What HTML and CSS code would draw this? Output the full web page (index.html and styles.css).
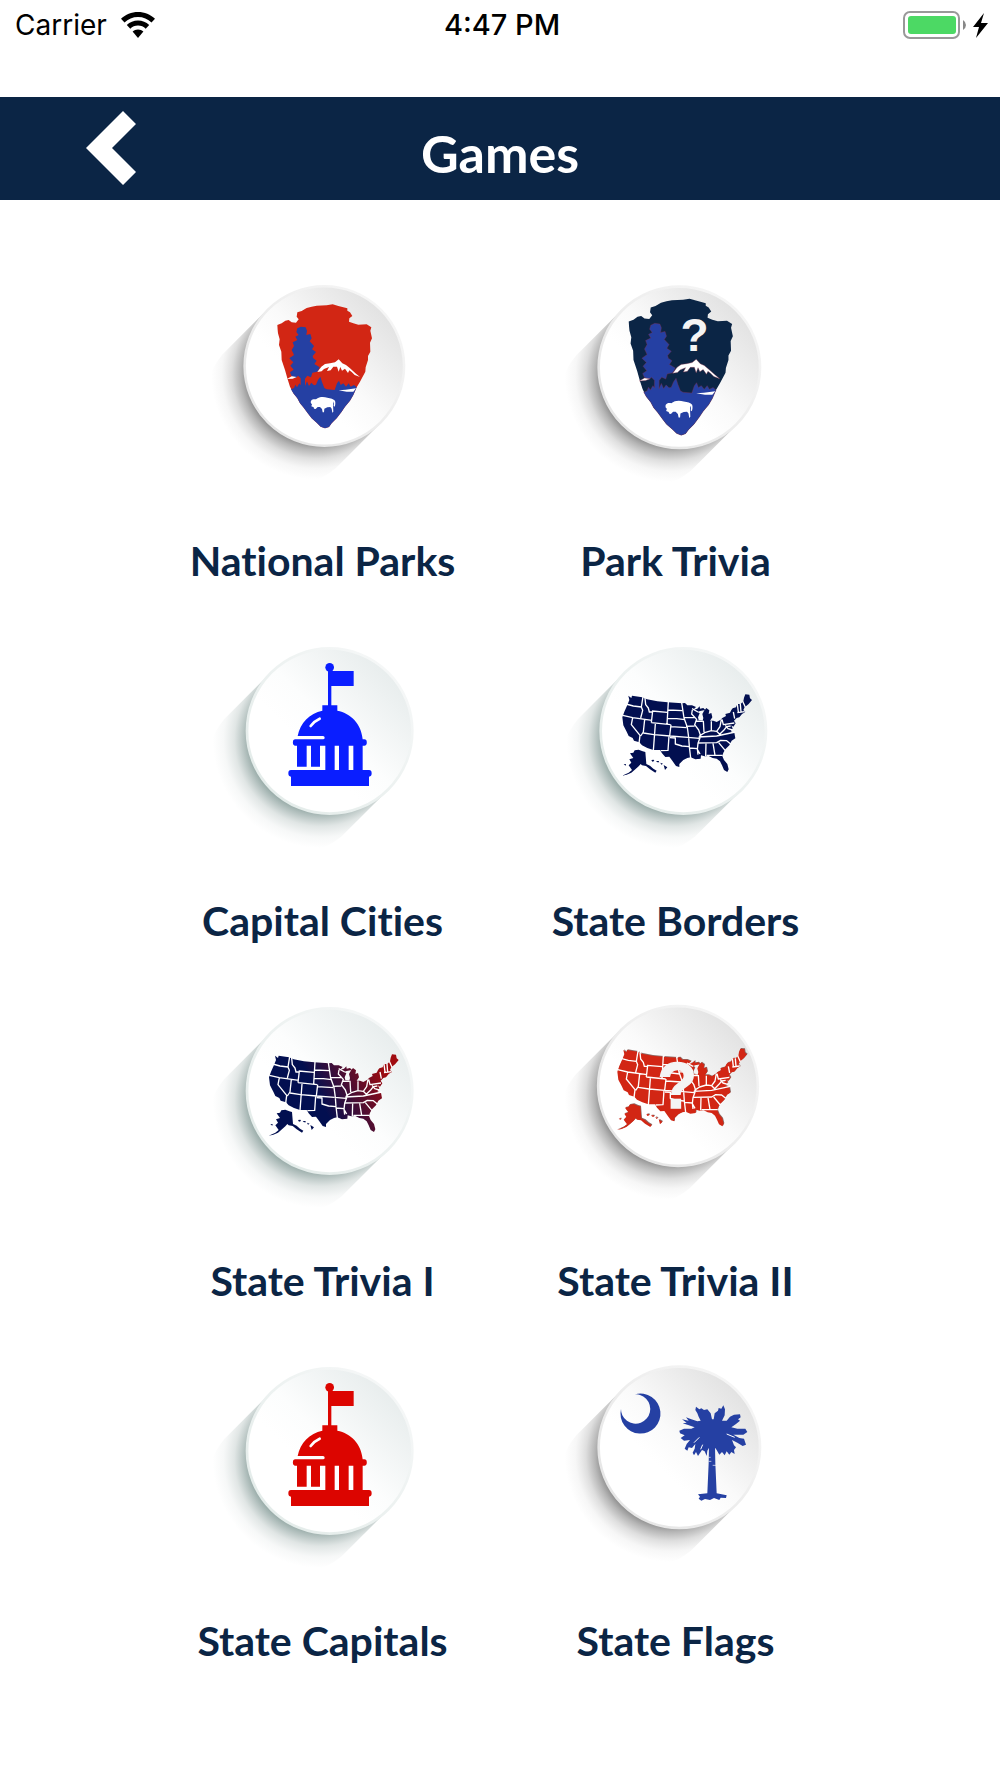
FILE: index.html
```html
<!DOCTYPE html>
<html lang="en">
<head>
<meta charset="utf-8">
<meta name="viewport" content="width=device-width, initial-scale=1">
<title>Games</title>
<link rel="stylesheet" href="styles.css">
</head>
<body>
<div class="status">
  <div class="status-left">
    <span>Carrier</span>
    <svg class="wifi" viewBox="0 0 34 26" aria-hidden="true">
      <path d="M17 0C10.500 0 4.500 2.500 0 6.800L3.500 10.500C7 7 11.800 5 17 5S27 7 30.500 10.500L34 6.800C29.500 2.500 23.500 0 17 0Z"/>
      <path d="M17 8.500C12.700 8.500 8.800 10.200 5.800 13L9.300 16.700C11.300 14.700 14 13.500 17 13.500S22.700 14.700 24.700 16.700L28.200 13C25.200 10.200 21.300 8.500 17 8.500Z"/>
      <path d="M17 17.500C14.900 17.500 13 18.300 11.600 19.600L17 26L22.400 19.600C21 18.300 19.100 17.500 17 17.500Z"/>
    </svg>
  </div>
  <time class="clock">4:47 PM</time>
  <div class="status-right">
    <svg class="battery" viewBox="0 0 86 28" aria-hidden="true">
      <rect x="1" y="1" width="55" height="26" rx="6" fill="none" stroke="#999" stroke-width="2"/>
      <rect x="5" y="5" width="48" height="18" rx="3" fill="#4cd964"/>
      <path d="M60 9Q63 11 63 14Q63 17 60 19Z" fill="#888"/>
      <path d="M81 2L70 16H76L73 27L85 12H78Z" fill="#000"/>
    </svg>
  </div>
</div>

<header class="bar">
  <button class="back" type="button" aria-label="Back">
    <svg viewBox="0 0 50 74" aria-hidden="true"><path d="M37 0L50 13L26 37L50 61L37 74L0 37Z" fill="#fff"/></svg>
  </button>
  <h1 class="title">Games</h1>
</header>

<main class="games">
  <a class="game" href="#national-parks">
    <svg class="icon" viewBox="9 0 660 660" aria-hidden="true">
      <defs>
        <linearGradient id="face-gray" gradientUnits="userSpaceOnUse" x1="-60" y1="60" x2="177" y2="-177">
          <stop offset="0" stop-color="#fff"/><stop offset=".3" stop-color="#fafafa"/><stop offset="1" stop-color="#e2e2e2"/>
        </linearGradient>
        <linearGradient id="face-teal" gradientUnits="userSpaceOnUse" x1="-60" y1="60" x2="177" y2="-177">
          <stop offset="0" stop-color="#fff"/><stop offset=".3" stop-color="#fcfdfd"/><stop offset="1" stop-color="#e8eded"/>
        </linearGradient>
        <linearGradient id="rim-gray" gradientUnits="userSpaceOnUse" x1="-177" y1="177" x2="177" y2="-177">
          <stop offset="0" stop-color="#e6e6e6"/><stop offset="1" stop-color="#f5f5f5"/>
        </linearGradient>
        <linearGradient id="rim-teal" gradientUnits="userSpaceOnUse" x1="-177" y1="177" x2="177" y2="-177">
          <stop offset="0" stop-color="#e4ecea"/><stop offset="1" stop-color="#f5f7f7"/>
        </linearGradient>
        <radialGradient id="cast-gray" gradientUnits="userSpaceOnUse" cx="-26" cy="26" r="325">
          <stop offset=".64" stop-color="#777" stop-opacity=".9"/><stop offset=".72" stop-color="#888" stop-opacity=".6"/><stop offset=".8" stop-color="#888" stop-opacity=".28"/><stop offset=".9" stop-color="#999" stop-opacity=".08"/><stop offset="1" stop-color="#999" stop-opacity="0"/>
        </radialGradient>
        <radialGradient id="cast-teal" gradientUnits="userSpaceOnUse" cx="-26" cy="26" r="325">
          <stop offset=".64" stop-color="#7f9793" stop-opacity=".9"/><stop offset=".72" stop-color="#8a9f9c" stop-opacity=".6"/><stop offset=".8" stop-color="#92a5a2" stop-opacity=".28"/><stop offset=".9" stop-color="#99aaa8" stop-opacity=".08"/><stop offset="1" stop-color="#99aaa8" stop-opacity="0"/>
        </radialGradient>
        <linearGradient id="navy-red" gradientUnits="userSpaceOnUse" x1="310" y1="330" x2="500" y2="235">
          <stop offset="0" stop-color="#020f50"/><stop offset="1" stop-color="#a00c10"/>
        </linearGradient>
        <g id="disc-gray">
          <path d="M-176-176L-316-36A250 250 0 0 0 36 316L176 176Z" fill="url(#cast-gray)"/>
          <circle r="247" fill="url(#face-gray)" stroke="url(#rim-gray)" stroke-width="8"/>
        </g>
        <g id="disc-teal">
          <path d="M-176-176L-316-36A250 250 0 0 0 36 316L176 176Z" fill="url(#cast-teal)"/>
          <circle r="248" fill="url(#face-teal)" stroke="url(#rim-teal)" stroke-width="8"/>
        </g>
        <g id="arrowhead">
          <path d="M202 165L215 160L226 152L236 150L245 157L258 158L266 148L260 140L262 127L275 123L290 114L305 110L320 107L350 106L368 103L385 108L400 112L412 115L412 122L420 127L427 138L418 145L417 155L430 160L445 164L470 163L484 172L481 182L486 205L480 218L481 245L474 258L474 270L467 292L466 305L458 320L450 335L440 352L430 375L420 392L405 410L395 425L380 445L365 460L357 471L345 475L332 470L320 458L305 445L295 432L280 412L270 400L262 385L250 370L240 350L232 325L225 300L215 270L214 245L207 225L209 208L204 190L203 180Z"/>
          <g class="park-line" fill="#2540a3">
            <path d="M243 358L252 354L256 344L261 352L268 340L272 346V325L264 317L258 323L245 318L240 307L251 299L241 287L250 277L238 265L252 255L245 240L252 228L248 217L262 210L256 200L266 195L259 186L262 175L273 170L287 172L291 182L289 195L301 192L305 205L299 214L312 228L306 238L318 246L308 258L310 265L320 272L313 282L329 292L322 305L307 308L303 322L292 317L285 326V348L291 334L297 348L304 338L312 346L318 344L324 330L331 320L336 336L343 354L350 358L374 360L381 340L387 332L392 345L400 340L408 350L416 340L422 350L432 345L440 352L430 375L420 392L405 410L395 425L380 445L365 460L357 471L345 475L332 470L320 458L305 445L295 432L280 412L270 400L262 385L250 370Z"/>
          </g>
          <g class="park-line" fill="#fff">
            <path d="M322 306L334 290L345 282L360 280L375 277L386 268L397 280L408 285L420 295L438 311L450 321L434 315L425 306L418 301L414 309L405 296L396 302L391 291L386 305L381 290L370 290L362 301L351 303L357 291L342 297L335 304Z"/>
            <path d="M231 327L245 319L260 321L248 326Z"/>
          </g>
          <path fill="#fff" d="M386 361L407 359L438 355L430 365L410 365ZM303 400C300 390 308 386 318 388C328 379 342 380 352 383C362 384 371 387 375 392C377 398 376 405 374 410L371 408L372 394L369 401L370 425L367 428L365 416L361 411L352 412L343 416L342 427L338 427L336 417L330 411L323 411L317 417L312 416L311 412L304 409L306 403Z"/>
        </g>
        <g id="capitol">
          <circle cx="329" cy="112" r="13"/>
          <path d="M324 115H334V123H401V168H334V226H352V242C393 250 424 282 428 328H433A7 9 0 0 1 433 347H428V420H447A8 10 0 0 1 447 440V468H213V440A8 10 0 0 1 213 420H316V347H300V410H273V347H260V410H231V347H226A7 9 0 0 1 226 328H309A5 5 0 0 0 309 318H233C240 280 269 249 307 242V226H324Z"/>
          <path d="M344 347H357V420H344ZM386 347H400V420H386Z" fill="#fff"/>
          <path d="M272 288Q283 273 299 266" fill="none" stroke="#fff" stroke-width="8" stroke-linecap="round"/>
        </g>
        <g id="usa">
          <path d="M175 197L184 204L186 197L217 202L231 208L262 214L293 217L336 220L345 219L352 226L366 226L378 231L369 240L382 236L389 229L390 236L400 234L406 240L390 243L382 246L389 250L384 262L386 270L398 272L400 264L397 252L402 243L409 234L418 241L416 252L424 249L427 262L420 272L430 272L440 276L452 269L457 264L468 258L466 252L480 248L484 240L488 235L498 232L502 222L512 222L520 214L522 203L526 193L538 194L540 205L546 210L536 222L524 232L520 240L526 246L516 252L508 262L500 264L492 272L497 280L490 290L484 286L488 296L482 304L493 308L496 325L485 332L478 346L466 358L460 368L457 378L462 390L472 402L476 418L472 426L462 420L456 406L450 394L440 386L428 384L416 378L404 379L393 376L392 386L376 388L362 382L352 384L340 390L328 402L328 411L318 408L308 394L298 380L286 381L276 370L270 360L250 360L232 354L216 346L208 337L192 332L188 324L176 318L170 305L160 286L157 262L163 245L172 225L178 210Z"/>
          <path d="M180 370L190 368L194 361L206 359L218 364L226 366L229 402L240 407L250 416L260 422L256 428L240 418L228 408L216 406L212 402L206 409L196 418L184 428L170 434L156 437L176 428L186 420L176 406L184 398L178 388L190 384L184 376ZM244 390L251 389L253 393L247 395ZM258 393L266 393L268 397L262 397ZM271 398L279 401L274 404ZM281 405L292 412L285 420ZM161 403L168 402L167 407Z"/>
          <g fill="none" stroke="#fff" stroke-width="4" stroke-linejoin="round">
            <path d="M168 222L190 228L214 231M219 200L214 231L218 241L212 264M158 256L188 263L246 271M188 263L184 284L210 316L207 340M224 268L220 306L212 318M225 204L227 224L235 234L238 246L247 246M248 243L244 278M246 243L292 247M295 215L291 283M244 278L302 284M256 282L250 362M220 309L252 314L300 318M303 284L299 318M297 318L294 361L272 362M300 323L316 324L316 342L336 348L358 350M300 318L354 322M303 290L350 293M295 240L338 242M292 265L320 266L345 269"/>
            <path d="M335 218L342 264L352 292L356 322L358 350L362 384M342 262L374 263M348 289L374 288M354 322L388 325M358 354L382 356L384 374M367 240L365 252L380 268L374 284L386 300L392 318L384 340L382 358L390 372M378 273L398 274M400 272L402 306M424 274L424 302M388 318L404 308L424 302L440 304L450 290L454 268M456 268L460 284L493 279M386 321L440 318L496 306M384 339L440 338L452 331L470 332L482 342M408 340L407 378M429 340L435 376M446 338L466 362M410 376L458 376M440 304L449 313L462 300L470 290L482 288M502 222L505 246M511 222L513 246M518 214L526 232M502 248L524 245M490 246L494 266M384 246L366 236M466 286L474 296L488 300"/>
          </g>
        </g>
      </defs>
      <use href="#disc-gray" transform="translate(343 288) scale(.968)"/>
      <use href="#arrowhead" fill="#d22614"/>
    </svg>
    <span class="name">National Parks</span>
  </a>

  <a class="game" href="#park-trivia">
    <svg class="icon park-quiz" viewBox="18 0 660 660" aria-hidden="true">
      <use href="#disc-gray" transform="translate(358 292) scale(.98)"/>
      <use href="#arrowhead" fill="#0b2545" transform="translate(-16 -27) scale(1.1)"/>
      <text x="404" y="243" font-size="138">?</text>
    </svg>
    <span class="name">Park Trivia</span>
  </a>

  <a class="game" href="#capital-cities">
    <svg class="icon" viewBox="-21 0 660 660" aria-hidden="true">
      <use href="#disc-teal" transform="translate(329 303)"/>
      <use href="#capitol" fill="#0a1eff"/>
    </svg>
    <span class="name">Capital Cities</span>
  </a>

  <a class="game" href="#state-borders">
    <svg class="icon" viewBox="-12 0 660 660" aria-hidden="true">
      <use href="#disc-teal" transform="translate(340 303)"/>
      <use href="#usa" fill="#020f50"/>
    </svg>
    <span class="name">State Borders</span>
  </a>

  <a class="game" href="#state-trivia-1">
    <svg class="icon" viewBox="-21 0 660 660" aria-hidden="true">
      <use href="#disc-teal" transform="translate(329 303)"/>
      <use href="#usa" fill="url(#navy-red)" transform="translate(-10 0)"/>
    </svg>
    <span class="name">State Trivia I</span>
  </a>

  <a class="game" href="#state-trivia-2">
    <svg class="icon" viewBox="-12 0 660 660" aria-hidden="true">
      <use href="#disc-gray" transform="translate(324 288) scale(.97)"/>
      <use href="#usa" fill="#8c6a66" transform="translate(-13 -19)"/>
      <use href="#usa" fill="#d22614" transform="translate(-15 -17)"/>
      <text class="bold-mark" x="322" y="353" font-size="194">?</text>
    </svg>
    <span class="name">State Trivia II</span>
  </a>

  <a class="game" href="#state-capitals">
    <svg class="icon" viewBox="-21 0 660 660" aria-hidden="true">
      <use href="#disc-teal" transform="translate(329 303)"/>
      <use href="#capitol" fill="#dc0500"/>
    </svg>
    <span class="name">State Capitals</span>
  </a>

  <a class="game" href="#state-flags">
    <svg class="icon" viewBox="-12 0 660 660" aria-hidden="true">
      <use href="#disc-gray" transform="translate(328 292) scale(.98)"/>
      <g fill="#2540a3">
        <path d="M153 177A60 60 0 1 0 195 133Q204 132 210 135A44 44 0 1 1 157 196Q153 188 153 177Z"/>
        <path d="M417 290H435L436 340L440 430L470 436L468 444L452 443L448 450L432 444L420 450L405 447L394 452L386 446L390 440L384 433L412 430L416 340Z"/>
        <path d="M378 170L388 178L394 175L402 180L412 178L422 190L426 208L431 208L434 190L444 182L446 174L454 176L460 166L465 178L464 196L456 212L470 212L480 200L492 194L510 193L512 202L504 208L510 212L498 222L484 232L502 236L526 236L532 246L520 254L490 254L508 264L522 266L528 284L518 288L502 278L486 270L492 286L498 292L492 300L494 312L484 306L478 314L470 304L464 316L456 306L448 314L440 300L434 292L418 292L412 302L410 318L404 304L396 300L384 318L378 306L372 316L368 308L374 296L376 282L366 294L356 292L352 302L344 296L350 282L360 270L342 272L332 264L344 256L330 250L328 242L342 236L364 236L374 232L352 224L338 220L350 218L336 208L356 212L348 202L364 208L382 214L392 212L386 200L382 190L376 180Z"/>
      </g>
      <path d="M388 262L372 278M398 284L392 298M470 252L494 262" fill="none" stroke="#fff" stroke-width="3"/>
      <path d="M416 334H424M428 346H438M416 322H422" fill="none" stroke="#fff" stroke-width="2"/>
    </svg>
    <span class="name">State Flags</span>
  </a>
</main>
</body>
</html>
```
FILE: styles.css
```css
* { box-sizing: border-box; }

body {
  margin: 0;
  background: #fff;
  color: #0b2545;
  font-family: Lato, "Liberation Sans", sans-serif;
  font-variant-ligatures: none;
}

.status {
  display: grid;
  grid-template-columns: 1fr auto 1fr;
  align-items: center;
  height: 97px;
  padding: 0 11px 48px 15px;
  color: #000;
  font: 400 28px/32px Inter, "Liberation Sans", sans-serif;
}

.status-left {
  display: flex;
  align-items: center;
  gap: 14px;
}

.wifi { width: 34px; height: 26px; }
.clock { font-size: 29px; font-weight: 500; }
.status-right { display: flex; justify-content: flex-end; }
.battery { width: 86px; height: 28px; }

.bar {
  display: grid;
  grid-template-columns: 1fr auto 1fr;
  height: 103px;
  background: #0b2545;
  color: #fff;
}

.back {
  justify-self: start;
  align-self: start;
  margin: 14px 0 0 86px;
  padding: 0;
  border: 0;
  background: none;
  cursor: pointer;
}

.back svg { display: block; width: 50px; height: 74px; }

.title {
  align-self: center;
  margin: 0;
  padding-top: 9px;
  font-size: 52px;
  font-weight: 700;
  line-height: 64px;
}

.games {
  display: grid;
  grid-template-columns: repeat(2, minmax(0, 353px));
  justify-content: center;
  padding: 70px 2px 96px 0;
}

.game {
  display: flex;
  flex-direction: column;
  align-items: center;
  gap: 48px;
  height: 360px;
  color: inherit;
  text-decoration: none;
}

.icon { width: 220px; height: 220px; overflow: visible; }

.icon text {
  fill: #f4f4f4;
  font-family: "Liberation Sans", sans-serif;
  font-weight: 700;
  text-anchor: middle;
}

.icon .bold-mark { stroke: #f4f4f4; stroke-width: 4; }

.park-line { stroke: var(--outline, none); }
.park-quiz { --outline: #8c3048; }

.name {
  font-size: 41px;
  font-weight: 700;
  line-height: 46px;
  white-space: nowrap;
}
```
